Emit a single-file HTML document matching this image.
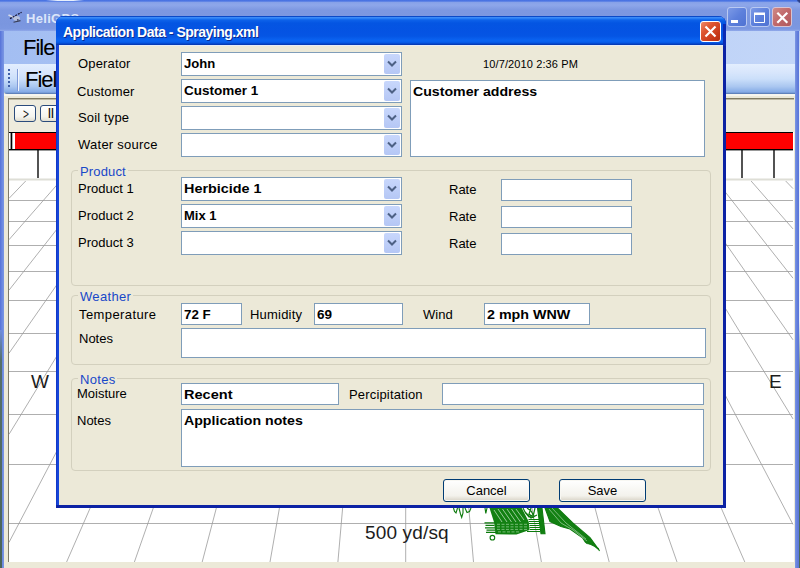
<!DOCTYPE html>
<html><head><meta charset="utf-8">
<style>
html,body{margin:0;padding:0;}
body{width:800px;height:568px;overflow:hidden;position:relative;background:#ece9d8;font-family:"Liberation Sans",sans-serif;font-size:13px;color:#000;}
div,span,svg{position:absolute;box-sizing:border-box;white-space:nowrap;}
svg{left:0;top:0;}
#mtitle{left:0;top:0;width:800px;height:31px;background:linear-gradient(#4670e2 0,#4f78e4 1.2px,#86a1e8 2.2px,#8ea7ea 5px,#7d98e1 10px,#7a96df 24px,#7c98e1 29px,#91a9ea 31px);}
#mtitle .t{left:26px;top:11px;color:#dde6fa;font-weight:bold;font-size:13px;letter-spacing:0.3px;}
#menu{left:4px;top:31px;width:791px;height:33px;background:linear-gradient(90deg,#a3bef2,#c3d6f8);}
#menu .t{left:19px;top:4px;font-size:22px;letter-spacing:-1px;}
#tool{left:4px;top:64px;width:791px;height:30px;background:linear-gradient(#e3eefe 0,#d8e6fc 28%,#cbdffa 50%,#a9c6f0 76%,#85abe6 93%,#6e92cc 97%,#4d6ea6 100%);border-radius:0 0 0 3px;}
#tool .t{left:21px;top:3px;font-size:22px;letter-spacing:-1px;}
#tl{left:4px;top:94px;width:791px;height:2px;background:#f6f5ee;}
#lb{left:0;top:31px;width:4px;height:537px;background:linear-gradient(90deg,#5572d8,#6a87e0 2px,#7a96e2 4px);}
#rb{left:795px;top:31px;width:5px;height:537px;background:linear-gradient(90deg,#7c97e4,#6480dc 2px,#5570d6);}
#strip{left:8px;top:98px;width:786px;height:35px;background:#eeebdd;border-left:1px solid #7d7a68;border-top:1px solid #7f7a62;box-shadow:inset 0 1px 0 #bdb8a2;}
#map{left:8px;top:132px;width:786px;height:430px;background:#fff;border-left:1px solid #7d7a68;}
.tb{border:1px solid #2b4b7c;border-radius:3px;background:linear-gradient(#fff,#f5f4ee 70%,#e0ddd0);height:17px;top:105px;font-size:15px;line-height:15px;color:#111;text-align:center;}
#dlg{left:56px;top:16px;width:670px;height:492px;background:#1646da;border-radius:8px 8px 0 0;box-shadow:inset -3px -3px 0 #0c22a4,inset 1px 0 0 #1238c8;}
#dtitle{left:0;top:0;width:670px;height:29px;border-radius:8px 8px 0 0;background:linear-gradient(#0a4ac8 0,#0a4ac8 1px,#3b8bf8 1px,#3a8af8 2px,#1a72f0 3px,#0c60e8 4.5px,#0455e2 7px,#0553e3 16px,#0555e4 20px,#0a62f0 24px,#0a64f2 25px,#0656e2 27px,#0440c0 28px,#0836ac 29px);}
#dtitle .t{left:7px;top:8px;color:#fff;font-weight:bold;font-size:14px;letter-spacing:-0.5px;text-shadow:1px 1px 0 #0a2a90;}
#dbody{left:3px;top:29px;width:664px;height:460px;background:#ece9d8;border-top:1px solid #e6edf8;}
.x{left:644px;top:5px;width:21px;height:21px;border:1px solid #fff;border-radius:3px;background:linear-gradient(135deg,#ee8a6a 0,#dd5530 35%,#c8391a 75%,#b53012);}
.wb{top:7px;width:20px;height:20px;border:1px solid #b9c9f2;border-radius:3px;background:linear-gradient(135deg,#7d9ae6 0,#5d80dc 50%,#4f72d2);}
.lbl{font-size:13px;}
.in{background:#fff;border:1px solid #7f9db9;font-weight:bold;font-size:13px;padding:3px 0 0 2px;}
.in b,.cb b{position:absolute;left:2px;top:3px;font-weight:bold;transform-origin:0 0;white-space:nowrap;}
.ta{padding-top:3px;}
.cb{background:#fff;border:1px solid #7f9db9;font-weight:bold;font-size:13px;padding:3px 0 0 2px;width:221px;height:24px;left:181px;}
.cb i{position:absolute;right:1px;top:1px;width:16px;height:20px;background:linear-gradient(#c8d7fc,#b5c7f5);border-radius:2px;}
.cb i svg{left:3px;top:6px;}
.gb{border:1px solid #d3d0be;border-radius:4px;}
.gl{color:#1848c8;background:#ece9d8;font-size:13px;padding:0 2px;}
.btn{border:1px solid #003c74;border-radius:3px;background:linear-gradient(#fff,#f3f2ec 75%,#d8d3c6);text-align:center;font-size:13px;width:87px;height:23px;line-height:21px;box-shadow:inset 0 0 0 1px #f8f7f2;}
</style></head><body>
<div id="mtitle"><span class="t">HeliGPS</span></div>
<div style="left:46px;top:0;width:38px;height:1.4px;background:linear-gradient(90deg,rgba(232,240,252,0),#e8f0fc 30%,#e8f0fc 72%,rgba(232,240,252,0));"></div>
<div style="left:797px;top:0;width:3px;height:3px;background:linear-gradient(225deg,#2c3f86 40%,rgba(0,0,0,0) 75%);"></div>
<div id="menu"><span class="t">File</span></div>
<div id="tool"><span class="t">Field</span></div>
<div id="tl"></div>
<div id="lb"></div><div id="rb"></div>
<div style="left:0;top:330px;width:1.5px;height:238px;background:linear-gradient(#6f8ddb 0,#56706a 30px,#4a6458 100%);"></div>
<div style="left:798.5px;top:31px;width:1.5px;height:537px;background:linear-gradient(#b9c8ee 0,#e4eaf8 40px,#e8eef9 290px,#56706a 350px,#4a6a58 100%);"></div>
<div id="strip"></div>
<div id="map"></div>
<div class="tb" style="left:14px;width:22px;"><span style="left:7.500px;top:0;transform:scaleX(0.68);transform-origin:0 0;">&gt;</span></div>
<div class="tb" style="left:40px;width:23px;font-size:14px;letter-spacing:-0.8px;text-indent:-2px;">II</div>
<div class="wb" style="left:727px;"></div>
<div class="wb" style="left:750px;"></div>
<div class="wb" style="left:772px;border-color:#d9c3d2;background:linear-gradient(135deg,#d08a86,#c0686a 50%,#b05a5e);"></div>
<svg width="800" height="568" viewBox="0 0 800 568">
 <!-- heli icon -->
 <path d="M8.5 15L14 17.5" stroke="#d5dae8" stroke-width="1.6" fill="none"/>
 <ellipse cx="16.5" cy="18.3" rx="3.4" ry="2.4" fill="#b9c3dd"/><circle cx="17.8" cy="19.8" r="0.9" fill="#3a3f66"/>
 <path d="M13.5 22.3L20.5 20.6" stroke="#3a3f55" stroke-width="1.1" fill="none"/>
 <path d="M10 18.6L21.6 12.3" stroke="#141432" stroke-width="1.2" stroke-dasharray="2 1" fill="none"/>
 <!-- window button glyphs -->
 <rect x="731" y="20" width="7" height="3" fill="#fff"/>
 <path d="M754.5 13.5H764.5V22.5H754.5Z" fill="none" stroke="#fff" stroke-width="1"/><rect x="754" y="12.500" width="11" height="2.500" fill="#fff"/>
 <path d="M777.3 12.800L787.3 22.800M787.3 12.800L777.3 22.800" stroke="#fff" stroke-width="2.2" fill="none"/>
 <!-- gripper -->
 <path d="M9 69v2M9 73v2M9 77v2M9 81v2M9 85v2" stroke="#3f5fa8" stroke-width="2" fill="none"/>
 <path d="M17.5 69V91" stroke="#7f9ad8" stroke-width="1"/><path d="M18.5 69V91" stroke="#f2f6fd" stroke-width="1"/>
 <!-- red bar -->
 <rect x="9" y="132" width="784" height="1" fill="#000"/>
 <rect x="9" y="133" width="784" height="16" fill="#fff"/>
 <rect x="15" y="133" width="778" height="16" fill="#fe0000"/>
 <rect x="10.600" y="133" width="1.700" height="16" fill="#000"/>
 <rect x="9" y="149" width="784" height="1.4" fill="#000"/>
 <path d="M38 150V178M70 150V178M102 150V178M134 150V178M166 150V178M198 150V178M230 150V178M262 150V178M294 150V178M326 150V178M358 150V178M390 150V178M422 150V178M454 150V178M486 150V178M518 150V178M550 150V178M582 150V178M614 150V178M646 150V178M678 150V178M710 150V178M742 150V178M774 150V178" stroke="#000" stroke-width="1.35" fill="none"/>
 <rect x="9" y="178.5" width="784" height="2" fill="#deded6"/>
 <path d="M25.7 181.0L9.0 198.4M60.3 181.0L9.0 239.7M94.8 181.0L9.0 290.2M129.4 181.0L9.0 353.2M163.9 181.0L9.0 434.3M198.4 181.0L9.0 542.4M233.0 181.0L66.6 562.0M267.5 181.0L134.4 562.0M302.1 181.0L202.2 562.0M336.6 181.0L270.0 562.0M371.2 181.0L337.9 562.0M405.7 181.0L405.7 562.0M440.2 181.0L473.5 562.0M474.8 181.0L541.4 562.0M509.3 181.0L609.2 562.0M543.9 181.0L677.0 562.0M578.4 181.0L744.8 562.0M613.0 181.0L793.0 524.5M647.5 181.0L793.0 418.9M682.0 181.0L793.0 339.8M716.6 181.0L793.0 278.2M751.1 181.0L793.0 228.9M785.7 181.0L793.0 188.6M9 200.5H793M9 221.5H793M9 245.5H793M9 271.5H793M9 300.5H793M9 333.5H793M9 371.5H793M9 414.5H793M9 464.5H793M9 523.5H793" stroke="#9a9a9a" stroke-width="0.8" fill="none"/>
 <!-- green tracks -->
 <g stroke="#0d7a0d" fill="none" stroke-width="1.1">
  <path d="M453.5 508l1 3.5 1.5 1.5 1.5-5M459 508l1.5 6 1.2 3.5 1.3-4.5 0-5M465 508l2 4.5 2.5-1 1.5-3.5M485 508l.8 5.5 1.2-5.5"/>
  <path d="M489.5 508L521.7 508 528.7 521.5 529.6 530 516.5 534.5 495.5 534.2 494.2 522.8Z" fill="#128012" stroke="none"/>
  <path d="M494 510l8 12M498 509l9 13M502.5 509l9 13M507 509l9 13M511.500 509l9 13M516 509l8 11" stroke="#b9dcb9" stroke-width="0.8"/>
  <path d="M497 524.3h30M497 526.9h31M497 529.4h31M498 531.9h22" stroke="#8fca8f" stroke-width="0.8" stroke-dasharray="3 1.5"/>
  <path d="M484.500 522.8h11M485.500 525.4h9M485 527.8h10M486.500 530.200h9M486 532.400h10" stroke-width="1.2"/>
  <circle cx="492.4" cy="537.7" r="2.3"/>
  <path d="M523 508l2.500 5 3.500 4 4.500-2.500 1.500-6.500M527 508l4 3 3 5M531 508l-2 6 5 4M525 512l6 6 6-3M528.500 519.500h10.500M529 521.500h10M529 523.500h10.500M529.500 525.500h10M529.500 527.500h10.500M530 529.500h10M527 531.500h13" stroke-width="1.2"/>
  <path d="M537.5 508L542 508 545 533.7 541 533.7Z" fill="#128012"/>
  <path d="M545 508L557.5 508 572.5 522.7 590 537.7 598.7 549.6 595 546.5 585 541.5 582.5 537.7 570 529 561 526.5 550 521.5Z" fill="#128012"/>
  <path d="M549 509l12 14 12 7 14 11M552 508l14 15 20 16" stroke="#a5d3a5" stroke-width="0.7"/>
  <path d="M585 541.5l2 2 3 .5M598 548l1.500 3"/>
 </g>
</svg>
<span style="left:31px;top:371px;font-size:19px;color:#1c1c1c;">W</span>
<span style="left:769px;top:371px;font-size:19px;color:#1c1c1c;">E</span>
<span style="left:365px;top:522px;font-size:19px;letter-spacing:0.15px;color:#1c1c1c;">500 yd/sq</span>

<div id="dlg">
 <div id="dtitle"><span class="t">Application Data - Spraying.xml</span></div>
 <div id="dbody"></div>
 <div style="left:667px;top:8px;width:3px;height:22px;background:#0a2ab4;"></div>
 <div class="x"><svg width="19" height="19" viewBox="0 0 19 19"><path d="M4.5 4.5L14.5 14.5M14.5 4.5L4.5 14.5" stroke="#fff" stroke-width="2.2" fill="none"/></svg></div>
</div>
<span class="lbl" style="left:78px;top:56px;letter-spacing:0.15px;">Operator</span>
<span class="lbl" style="left:77px;top:84px;letter-spacing:0.15px;">Customer</span>
<span class="lbl" style="left:78px;top:110px;letter-spacing:0.15px;">Soil type</span>
<span class="lbl" style="left:78px;top:137px;letter-spacing:0.25px;">Water source</span>
<div class="cb" style="top:52px;"><b style="transform:scaleX(1.006)">John</b><i><svg width="10" height="8" viewBox="0 0 10 8"><path d="M1 1.5L5 5.5L9 1.5" stroke="#4d6185" stroke-width="2" fill="none"/></svg></i></div>
<div class="cb" style="top:79px;"><b style="transform:scaleX(1.038)">Customer 1</b><i><svg width="10" height="8" viewBox="0 0 10 8"><path d="M1 1.5L5 5.5L9 1.5" stroke="#4d6185" stroke-width="2" fill="none"/></svg></i></div>
<div class="cb" style="top:106px;"><i><svg width="10" height="8" viewBox="0 0 10 8"><path d="M1 1.5L5 5.5L9 1.5" stroke="#4d6185" stroke-width="2" fill="none"/></svg></i></div>
<div class="cb" style="top:133px;"><i><svg width="10" height="8" viewBox="0 0 10 8"><path d="M1 1.5L5 5.5L9 1.5" stroke="#4d6185" stroke-width="2" fill="none"/></svg></i></div>
<span style="left:483px;top:58px;font-size:11px;letter-spacing:0.12px;">10/7/2010 2:36 PM</span>
<div class="in ta" style="left:410px;top:80px;width:295px;height:77px;"><b style="transform:scaleX(1.088)">Customer address</b></div>

<div class="gb" style="left:71px;top:170px;width:640px;height:116px;"></div>
<span class="gl" style="left:78px;top:164px;letter-spacing:0.15px;">Product</span>
<span class="lbl" style="left:78px;top:181px;">Product 1</span>
<span class="lbl" style="left:78px;top:208px;">Product 2</span>
<span class="lbl" style="left:78px;top:235px;">Product 3</span>
<div class="cb" style="top:177px;"><b style="transform:scaleX(1.106)">Herbicide 1</b><i><svg width="10" height="8" viewBox="0 0 10 8"><path d="M1 1.5L5 5.5L9 1.5" stroke="#4d6185" stroke-width="2" fill="none"/></svg></i></div>
<div class="cb" style="top:204px;"><b style="transform:scaleX(0.999)">Mix 1</b><i><svg width="10" height="8" viewBox="0 0 10 8"><path d="M1 1.5L5 5.5L9 1.5" stroke="#4d6185" stroke-width="2" fill="none"/></svg></i></div>
<div class="cb" style="top:231px;"><i><svg width="10" height="8" viewBox="0 0 10 8"><path d="M1 1.5L5 5.5L9 1.5" stroke="#4d6185" stroke-width="2" fill="none"/></svg></i></div>
<span class="lbl" style="left:449px;top:182px;">Rate</span>
<span class="lbl" style="left:449px;top:209px;">Rate</span>
<span class="lbl" style="left:449px;top:236px;">Rate</span>
<div class="in" style="left:501px;top:179px;width:131px;height:22px;"></div>
<div class="in" style="left:501px;top:206px;width:131px;height:22px;"></div>
<div class="in" style="left:501px;top:233px;width:131px;height:22px;"></div>

<div class="gb" style="left:71px;top:295px;width:640px;height:70px;"></div>
<span class="gl" style="left:78px;top:289px;letter-spacing:0.33px;">Weather</span>
<span class="lbl" style="left:79px;top:307px;letter-spacing:0.4px;">Temperature</span>
<div class="in" style="left:181px;top:303px;width:61px;height:22px;"><b style="transform:scaleX(1.028)">72 F</b></div>
<span class="lbl" style="left:250px;top:307px;letter-spacing:0.2px;">Humidity</span>
<div class="in" style="left:314px;top:303px;width:89px;height:22px;"><b style="transform:scaleX(1.037)">69</b></div>
<span class="lbl" style="left:423px;top:307px;">Wind</span>
<div class="in" style="left:484px;top:303px;width:106px;height:22px;"><b style="transform:scaleX(1.098)">2 mph WNW</b></div>
<span class="lbl" style="left:79px;top:331px;">Notes</span>
<div class="in" style="left:181px;top:328px;width:525px;height:30px;"></div>

<div class="gb" style="left:71px;top:378px;width:640px;height:93px;"></div>
<span class="gl" style="left:78px;top:372px;letter-spacing:0.3px;">Notes</span>
<span class="lbl" style="left:77px;top:386px;">Moisture</span>
<div class="in" style="left:181px;top:383px;width:158px;height:22px;"><b style="transform:scaleX(1.119)">Recent</b></div>
<span class="lbl" style="left:349px;top:387px;letter-spacing:0.17px;">Percipitation</span>
<div class="in" style="left:442px;top:383px;width:262px;height:22px;"></div>
<span class="lbl" style="left:77px;top:413px;">Notes</span>
<div class="in ta" style="left:181px;top:409px;width:523px;height:58px;"><b style="transform:scaleX(1.089)">Application notes</b></div>

<div class="btn" style="left:443px;top:479px;">Cancel</div>
<div class="btn" style="left:559px;top:479px;">Save</div>
</body></html>
